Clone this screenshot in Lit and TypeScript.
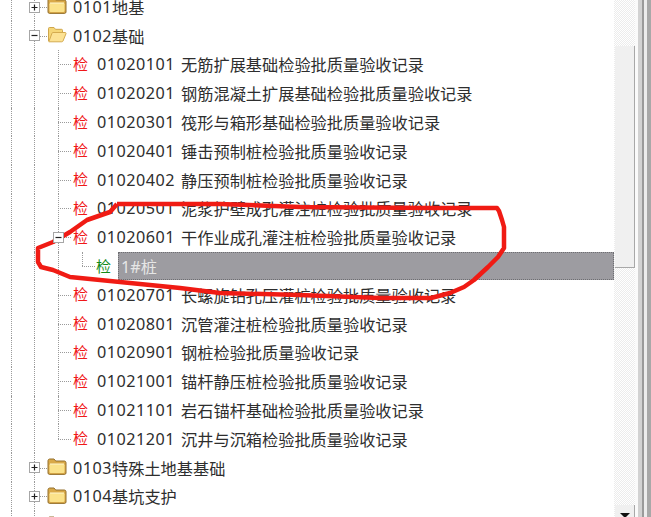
import { LitElement, html, css, svg } from "lit";
import { customElement } from "lit/decorators.js";

const closedFolder = html`<svg class="folder" width="20" height="17" viewBox="0 0 20 17">
  <path d="M1 15V2.700C1 1.800 1.700 1 2.700 1h4.300l1.700 2h8.600c1 0 1.700.7 1.700 1.700V15c0 .8-.6 1.400-1.400 1.400H2.400C1.600 16.400 1 15.800 1 15z" fill="#d9a948" stroke="#94702f"/>
  <rect x="2.500" y="6" width="15" height="9" rx="1.200" fill="#fbe28a"/>
  <path d="M3 6h14" stroke="#fff6cf"/>
</svg>`;

const openFolder = html`<svg class="folder" width="20" height="17" viewBox="0 0 20 17">
  <path d="M1.500 15V2.500c0-.6.400-1 1-1h4.500l1.500 1.800h6c.6 0 1 .4 1 1V6" fill="#f5d677" stroke="#cfa64c"/>
  <path d="M1.800 15.800 5 7.200c.2-.5.500-.7 1-.7h12c.8 0 1.200.5 1 1.200l-3 7.300c-.2.500-.6.800-1.200.800z" fill="#fce294" stroke="#d4ab50"/>
</svg>`;

const expander = (open: boolean) => html`<span class="box">
  <svg width="11" height="11" viewBox="0 0 11 11">
    <rect x="0.500" y="0.500" width="10" height="10" fill="#fff" stroke="#a6a6a6"/>
    <path d=${open ? "M2.500 5.500h6" : "M2.500 5.500h6M5.500 2.500v6"} stroke="#222" stroke-width="1.200"/>
  </svg>
</span>`;

const records: [string, string][] = [
  ["01020101", "无筋扩展基础检验批质量验收记录"],
  ["01020201", "钢筋混凝土扩展基础检验批质量验收记录"],
  ["01020301", "筏形与箱形基础检验批质量验收记录"],
  ["01020401", "锤击预制桩检验批质量验收记录"],
  ["01020402", "静压预制桩检验批质量验收记录"],
  ["01020501", "泥浆护壁成孔灌注桩检验批质量验收记录"],
  ["01020601", "干作业成孔灌注桩检验批质量验收记录"],
  ["01020701", "长螺旋钻孔压灌桩检验批质量验收记录"],
  ["01020801", "沉管灌注桩检验批质量验收记录"],
  ["01020901", "钢桩检验批质量验收记录"],
  ["01021001", "锚杆静压桩检验批质量验收记录"],
  ["01021101", "岩石锚杆基础检验批质量验收记录"],
  ["01021201", "沉井与沉箱检验批质量验收记录"],
];

const strokePoints = "117,204 180,204 220,204 300,207 430,208 497,208 499,211 502,220 504,227 504,248 498,257 488,267 474,280 464,287 450,293 431,298 380,298 300,295 220,293 180,288 120,282 70,277 53,270 41,267 38,262 38,248 43,246 53,242 70,232 87,220 110,212 117,204";

@customElement("app-root")
export class AppRoot extends LitElement {
  static styles = css`
    :host {
      display: block;
      width: 651px;
      height: 517px;
      position: relative;
      overflow: hidden;
      background: #fff;
      font-family: "Noto Sans", "Noto Sans CJK SC", sans-serif;
      font-size: 16.2px;
      color: #2e2e2e;
    }
    .frame { display: flex; height: 517px; }
    .tree { flex: 0 0 614px; height: 517px; overflow: hidden; }
    .rows { margin-top: -7.5px; }
    .row { display: flex; align-items: center; height: 28.8px; white-space: nowrap; }
    .cell { flex: none; width: 24px; height: 100%; position: relative; }
    .cell.first { width: 23px; }
    .line::before {
      content: "";
      position: absolute;
      left: 11px;
      top: 0;
      bottom: 0;
      border-left: 1px dotted #9a9a9a;
    }
    .half::before { bottom: 50%; }
    .tee::after {
      content: "";
      position: absolute;
      left: 11px;
      top: 50%;
      width: 13px;
      border-top: 1px dotted #9a9a9a;
    }
    .box { position: absolute; left: 6px; top: 9px; width: 11px; height: 11px; z-index: 1; line-height: 0; }
    .cell.line:has(.box)::after {
      content: "";
      position: absolute;
      left: 17px;
      top: 50%;
      width: 7px;
      border-top: 1px dotted #9a9a9a;
    }
    .folder { flex: none; margin: 0 6px 2px 0; }
    .code { letter-spacing: 0.5px; }
    .mark { flex: none; width: 15px; font-size: 15px; line-height: 1; color: #f01818; margin: 0 9px 0 2px; }
    .mark.green { color: #128a18; margin: 0 7px 0 1px; }
    .name { margin-left: 6px; }
    .sel {
      flex: 1;
      align-self: stretch;
      box-sizing: border-box;
      background: #9d9ca1;
      border: 1px dotted #6e6e72;
      color: #e6e6e6;
      display: flex;
      align-items: center;
      padding-left: 2px;
    }
    .scroll {
      flex: 0 0 21px;
      height: 517px;
      background-color: #fff;
      background-image: repeating-conic-gradient(#ececec 0 25%, #fff 0 50%);
      background-size: 2px 2px;
      display: flex;
      flex-direction: column;
    }
    .track { flex: none; height: 46px; }
    .track.grow { flex: 1; }
    .thumb {
      flex: none;
      height: 222px;
      box-sizing: border-box;
      margin-left: 1px;
      background: #f0f0f0;
      border-right: 1px solid #a8a8a8;
      border-bottom: 1px solid #a8a8a8;
    }
    .down {
      flex: none;
      height: 12px;
      box-sizing: border-box;
      margin-left: 1px;
      background: #f0f0f0;
      border-right: 1px solid #a8a8a8;
      display: flex;
      justify-content: center;
      padding-top: 8px;
    }
    .arrow { width: 0; height: 0; border-left: 5px solid transparent; border-right: 5px solid transparent; border-top: 5px solid #111; }
    .edge { flex: 0 0 16px; height: 517px; display: flex; }
    .edge i { display: block; height: 100%; }
    .s1 { width: 3px; background: #fafafa; }
    .s2 { width: 4px; background: #d2d2d2; }
    .s3 { width: 2px; background: #9a9a9a; }
    .s4 { width: 3px; background: #ececec; }
    .s5 { width: 4px; background: #a8a8a8; }
    .ink { position: absolute; left: 0; top: 0; pointer-events: none; }
  `;

  private guides(extra: unknown = "") {
    return html`<span class="cell first line"></span><span class="cell line">${extra}</span>`;
  }

  private recordRow(code: string, name: string, i: number) {
    const last = i === records.length - 1;
    return html`<div class="row">
      <span class="cell first line"></span>
      <span class="cell line"></span>
      <span class="cell line tee ${last ? "half" : ""}">${i === 6 ? expander(true) : ""}</span>
      <span class="mark">检</span>
      <span class="code">${code}</span>
      <span class="name">${name}</span>
    </div>`;
  }

  render() {
    return html`
      <div class="frame">
        <div class="tree">
          <div class="rows">
            <div class="row">
              ${this.guides(expander(false))}
              ${closedFolder}<span class="code">0101</span>地基
            </div>
            <div class="row">
              ${this.guides(expander(true))}
              ${openFolder}<span class="code">0102</span>基础
            </div>
            ${records.map((r, i) => html`
              ${this.recordRow(r[0], r[1], i)}
              ${i === 6 ? html`<div class="row">
                <span class="cell first line"></span>
                <span class="cell line"></span>
                <span class="cell line"></span>
                <span class="cell line half tee"></span>
                <span class="mark green">检</span>
                <span class="sel">1#桩</span>
              </div>` : ""}
            `)}
            <div class="row">
              ${this.guides(expander(false))}
              ${closedFolder}<span class="code">0103</span>特殊土地基基础
            </div>
            <div class="row">
              ${this.guides(expander(false))}
              ${closedFolder}<span class="code">0104</span>基坑支护
            </div>
            <div class="row">
              ${this.guides(expander(false))}
              ${closedFolder}
            </div>
          </div>
        </div>
        <div class="scroll">
          <div class="track"></div>
          <div class="thumb"></div>
          <div class="track grow"></div>
          <div class="down"><span class="arrow"></span></div>
        </div>
        <div class="edge">
          <i class="s1"></i><i class="s2"></i><i class="s3"></i><i class="s4"></i><i class="s5"></i>
        </div>
      </div>
      <svg class="ink" width="651" height="517" viewBox="0 0 651 517">
        ${svg`<polyline points=${strokePoints} fill="none" stroke="#f01b14" stroke-width="4.500" stroke-linejoin="round"/>`}
      </svg>
    `;
  }
}
